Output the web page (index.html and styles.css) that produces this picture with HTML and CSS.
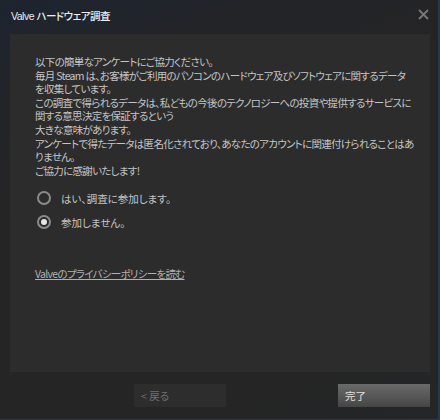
FILE: index.html
```html
<!DOCTYPE html>
<html lang="ja">
<head>
<meta charset="utf-8">
<link rel="stylesheet" href="styles.css">
</head>
<body>
<div class="window">
  <div class="titlebar">
    <span class="title">Valve ハードウェア調査</span>
    <svg class="close" width="11" height="11" viewBox="0 0 11 11"><path d="M1 1L10 10M10 1L1 10" stroke="#777" stroke-width="1.8"/></svg>
  </div>
  <div class="panel">
    <div class="intro">
      以下の簡単なアンケートにご協力ください。<br>
      毎月 Steam は、お客様がご利用のパソコンのハードウェア及びソフトウェアに関するデータ<br>
      を収集しています。<br>
      この調査で得られるデータは、私どもの今後のテクノロジーへの投資や提供するサービスに<br>
      関する意思決定を保証するという<br>
      大きな意味があります。<br>
      アンケートで得たデータは匿名化されており、あなたのアカウントに関連付けられることはあ<br>
      りません。<br>
      ご協力に感謝いたします!
    </div>
    <div class="options">
      <div class="option"><span class="radio"></span><span>はい、調査に参加します。</span></div>
      <div class="option"><span class="radio checked"></span><span>参加しません。</span></div>
    </div>
    <a class="link">Valveのプライバシーポリシーを読む</a>
  </div>
  <div class="footer">
    <div class="btn back">&lt; 戻る</div>
    <div class="btn done">完了</div>
  </div>
</div>
</body>
</html>
```
FILE: styles.css
```css
html, body {
  margin: 0;
  padding: 0;
  width: 440px;
  height: 420px;
  overflow: hidden;
  background: #232323;
}
.window {
  box-sizing: border-box;
  width: 440px;
  height: 420px;
  background: linear-gradient(160deg, #1d2430 0%, #232428 18%, #252525 40%, #252525 85%, #242628 100%);
  border-right: 2px solid #24394e;
  border-bottom: 1px solid #24394e;
  font-family: "Noto Sans CJK JP", "Liberation Sans", sans-serif;
  font-feature-settings: "palt";
  display: flex;
  flex-direction: column;
}
.titlebar {
  height: 34px;
  display: flex;
  align-items: flex-start;
  justify-content: space-between;
  padding: 8px 9px 0 11px;
  box-sizing: border-box;
}
.title {
  color: #ececec;
  font-size: 10.5px;
  font-weight: 500;
  letter-spacing: -0.5px;
  font-family: "Liberation Sans", "Noto Sans CJK JP", sans-serif;
  line-height: 16px;
}
.close {
  margin-top: 1px;
}
.panel {
  margin: 0 8px 0 10px;
  height: 338px;
  background: #2c2c2c;
  padding: 21px 25px 0 25px;
  box-sizing: border-box;
  display: flex;
  flex-direction: column;
}
.intro {
  color: #c4c4c4;
  font-size: 10.5px;
  line-height: 13.6px;
  letter-spacing: -0.7px;
  white-space: nowrap;
}
.options {
  margin-top: 14px;
  display: flex;
  flex-direction: column;
  gap: 10px;
}
.option {
  display: flex;
  align-items: center;
  gap: 10px;
  color: #c4c4c4;
  font-size: 10.5px;
  height: 14px;
}
.radio {
  width: 10px;
  height: 10px;
  border: 2px solid #8a8a8a;
  border-radius: 50%;
  box-sizing: content-box;
  margin-left: 2px;
  position: relative;
}
.radio.checked::after {
  content: "";
  position: absolute;
  left: 2px;
  top: 2px;
  width: 6px;
  height: 6px;
  border-radius: 50%;
  background: #e6e6e6;
}
.link {
  margin-top: 37px;
  color: #b0b0b0;
  font-size: 10.5px;
  letter-spacing: -0.7px;
  text-decoration: underline;
}
.footer {
  display: flex;
  justify-content: flex-end;
  padding: 12px 8px 0 0;
  gap: 112px;
}
.btn {
  width: 92px;
  height: 23px;
  box-sizing: border-box;
  padding-left: 7px;
  font-size: 10.5px;
  line-height: 23px;
}
.back {
  background: #2d2d2d;
  color: #707070;
}
.done {
  background: linear-gradient(#6a6a6a, #464646);
  color: #e0e0e0;
}
```
